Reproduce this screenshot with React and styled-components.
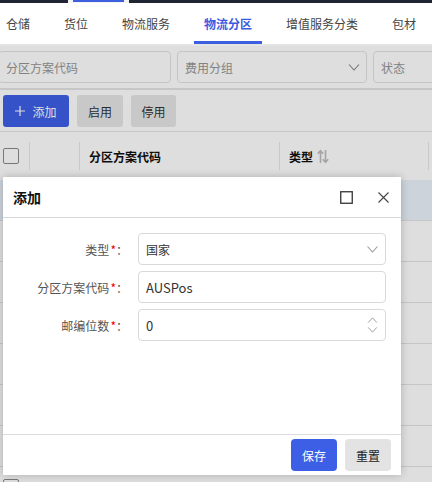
import React from "react";
import styled, { createGlobalStyle } from "styled-components";

const Global = createGlobalStyle`
  html, body { margin: 0; padding: 0; }
  body {
    width: 432px; height: 482px; overflow: hidden; background: #fff;
    font-family: "Noto Sans CJK SC", "Noto Sans", sans-serif;
    font-size: 12px; color: #333;
  }
  * { box-sizing: border-box; }
`;

const Page = styled.div`
  width: 432px; height: 482px; overflow: hidden;
  display: flex; flex-direction: column;
`;

const TopBar = styled.div`
  height: 3px; background: #1f2533; display: flex; flex-shrink: 0;
`;
const TopActive = styled.div`
  margin-left: 68px; width: 61px; background: #f4f4f4; display: flex; padding: 0 5px;
  &::before { content: ""; flex: 1; height: 2px; background: #3c5fe0; }
`;

const TabBar = styled.div`
  height: 41px; background: #fff; display: flex; gap: 14px; margin-left: -4px; flex-shrink: 0;
`;
const Tab = styled.div`
  padding: 3px 10px 0; display: flex; align-items: center; white-space: nowrap;
  font-size: 12px; color: ${p => (p.$active ? "#3c5ae0" : "#444")};
  font-weight: ${p => (p.$active ? 700 : 400)};
  border-bottom: 3px solid ${p => (p.$active ? "#3c5fe0" : "transparent")};
`;

const Content = styled.div`
  position: relative; flex: 1; background: #fff; border-top: 2px solid #e4e4e4;
  overflow: hidden;
`;
const Mask = styled.div`
  position: absolute; inset: 0; background: rgba(0, 0, 0, 0.13);
`;

const FilterRow = styled.div`
  display: flex; gap: 6px; padding: 5px 0; margin-left: -2px;
  border-bottom: 2px solid #e4e4e4;
`;
const FilterBox = styled.div`
  flex: 0 0 ${p => p.$w}px; height: 32px; border: 1px solid #e2e2e2; border-radius: 4px;
  display: flex; align-items: center; justify-content: space-between;
  padding: 0 6px 0 7px; color: #969696; white-space: nowrap;
`;

const ButtonRow = styled.div`
  display: flex; gap: 8px; padding: 5px 3px 4px; border-bottom: 1px solid #e4e4e4;
`;
const ToolButton = styled.div`
  height: 32px; width: ${p => p.$w}px; border-radius: 3px;
  display: flex; align-items: center; justify-content: center; gap: 7px; white-space: nowrap;
  background: ${p => (p.$primary ? "#3d5fe6" : "#e6e6e6")};
  color: ${p => (p.$primary ? "#fff" : "#333")};
`;

const Grid = styled.div`
  display: grid; grid-template-columns: 29px 50px 200px 149px 1fr;
`;
const HeadRow = styled(Grid)`
  height: 48px; align-items: center;
`;
const HeadCell = styled.div`
  height: 28px; display: flex; align-items: center; gap: 4px;
  font-weight: 700; color: #111;
  border-left: ${p => (p.$first ? "none" : "1px solid #e6e6e6")};
  padding-left: ${p => (p.$first ? 3 : 9)}px;
`;
const Check = styled.div`
  width: 16px; height: 16px; border: 1px solid #8a8a8a; border-radius: 2px; background: #fff;
`;
const BodyRow = styled(Grid)`
  height: 41px; align-items: center; border-bottom: 1px solid #e4e4e4;
  background: ${p => (p.$sel ? "#ecf3fc" : "#fff")};
`;
const BodyCell = styled.div`
  padding-left: ${p => (p.$first ? 3 : 9)}px; display: flex; align-items: center;
`;

const Modal = styled.div`
  position: absolute; left: 3px; top: 131px; width: 398px; height: 298px;
  background: #fff; box-shadow: 0 0 8px rgba(0, 0, 0, 0.22);
  display: flex; flex-direction: column;
`;
const ModalHead = styled.div`
  height: 41px; border-bottom: 1px solid #d6d6d6; display: flex; align-items: center;
  padding: 0 12px 0 10px; flex-shrink: 0;
`;
const ModalTitle = styled.div`
  flex: 1; font-size: 14px; font-weight: 700; color: #111;
`;
const HeadIcons = styled.div`
  display: flex; align-items: center; gap: 25px;
`;
const ModalBody = styled.div`
  flex: 1; padding: 15px 15px 0 0; display: flex; flex-direction: column; gap: 6px;
`;
const FormRow = styled.div`
  display: flex; align-items: center;
`;
const Label = styled.div`
  width: 135px; padding-right: 10px; text-align: right; color: #555; white-space: nowrap;
  & b { color: #e00; font-weight: 400; margin-left: 1px; }
`;
const Control = styled.div`
  flex: 1; height: 32px; border: 1px solid #d9d9d9; border-radius: 4px;
  display: flex; align-items: center; justify-content: space-between;
  padding: 0 6px 0 7px; color: #333; font-size: ${p => (p.$latin ? 13 : 12)}px;
`;
const Spinner = styled.div`
  display: flex; flex-direction: column; gap: 4px; margin-right: 1px;
`;
const ModalFoot = styled.div`
  height: 41px; border-top: 1px solid #dcdcdc; display: flex; align-items: center;
  justify-content: flex-end; gap: 8px; padding: 0 10px 0 0; flex-shrink: 0;
`;
const FootButton = styled.div`
  width: 46px; height: 32px; border-radius: 4px; display: flex; align-items: center;
  justify-content: center; font-size: 12px;
  background: ${p => (p.$primary ? "#3d5fe6" : "#e3e3e3")};
  color: ${p => (p.$primary ? "#fff" : "#222")};
`;

const Chevron = ({ up, color = "#888", w = 12, h = 7 }) => (
  <svg width={w} height={h} viewBox="0 0 12 7" fill="none">
    <path d={up ? "M1 6.5 L6 1 L11 6.5" : "M1 0.5 L6 6 L11 0.5"} stroke={color} strokeWidth="1.1" />
  </svg>
);

const SortIcon = () => (
  <svg width="12" height="15" viewBox="0 0 12 15" fill="none" stroke="#bdbdbd" strokeWidth="1.6">
    <path d="M3.5 14 V2 M0.8 4.8 L3.5 1.8 L6.2 4.8" />
    <path d="M8.5 1 V13 M5.8 10.2 L8.5 13.2 L11.2 10.2" />
  </svg>
);

const tabs = ["仓储", "货位", "物流服务", "物流分区", "增值服务分类", "包材"];

export default function App() {
  return (
    <Page>
      <Global />
      <TopBar><TopActive /></TopBar>
      <TabBar>
        {tabs.map(t => (
          <Tab key={t} $active={t === "物流分区"}>{t}</Tab>
        ))}
      </TabBar>
      <Content>
        <FilterRow>
          <FilterBox $w={173}>分区方案代码</FilterBox>
          <FilterBox $w={190}>费用分组<Chevron /></FilterBox>
          <FilterBox $w={190}>状态</FilterBox>
        </FilterRow>
        <ButtonRow>
          <ToolButton $primary $w={66}>
            <svg width="10" height="10" viewBox="0 0 10 10" stroke="#fff" strokeWidth="1.2">
              <path d="M5 0 V10 M0 5 H10" />
            </svg>
            添加
          </ToolButton>
          <ToolButton $w={46}>启用</ToolButton>
          <ToolButton $w={45}>停用</ToolButton>
        </ButtonRow>
        <HeadRow>
          <HeadCell $first><Check /></HeadCell>
          <HeadCell />
          <HeadCell>分区方案代码</HeadCell>
          <HeadCell>类型<SortIcon /></HeadCell>
          <HeadCell />
        </HeadRow>
        {[0, 1, 2, 3, 4, 5, 6, 7].map(i => (
          <BodyRow key={i} $sel={i === 0}>
            <BodyCell $first><Check /></BodyCell>
            <BodyCell />
            <BodyCell />
            <BodyCell />
            <BodyCell />
          </BodyRow>
        ))}
        <Mask />
        <Modal>
          <ModalHead>
            <ModalTitle>添加</ModalTitle>
            <HeadIcons>
              <svg width="13" height="13" viewBox="0 0 13 13" fill="none">
                <rect x="0.75" y="0.75" width="11.5" height="11.5" stroke="#333" strokeWidth="1.3" />
              </svg>
              <svg width="11" height="11" viewBox="0 0 11 11" fill="none" stroke="#444" strokeWidth="1.1">
                <path d="M0.5 0.5 L10.5 10.5 M10.5 0.5 L0.5 10.5" />
              </svg>
            </HeadIcons>
          </ModalHead>
          <ModalBody>
            <FormRow>
              <Label>类型<b>*</b>：</Label>
              <Control>国家<Chevron color="#999" w={13} h={7} /></Control>
            </FormRow>
            <FormRow>
              <Label>分区方案代码<b>*</b>：</Label>
              <Control $latin>AUSPos</Control>
            </FormRow>
            <FormRow>
              <Label>邮编位数<b>*</b>：</Label>
              <Control $latin>
                0
                <Spinner>
                  <Chevron up color="#999" w={11} h={6} />
                  <Chevron color="#999" w={11} h={6} />
                </Spinner>
              </Control>
            </FormRow>
          </ModalBody>
          <ModalFoot>
            <FootButton $primary>保存</FootButton>
            <FootButton>重置</FootButton>
          </ModalFoot>
        </Modal>
      </Content>
    </Page>
  );
}
